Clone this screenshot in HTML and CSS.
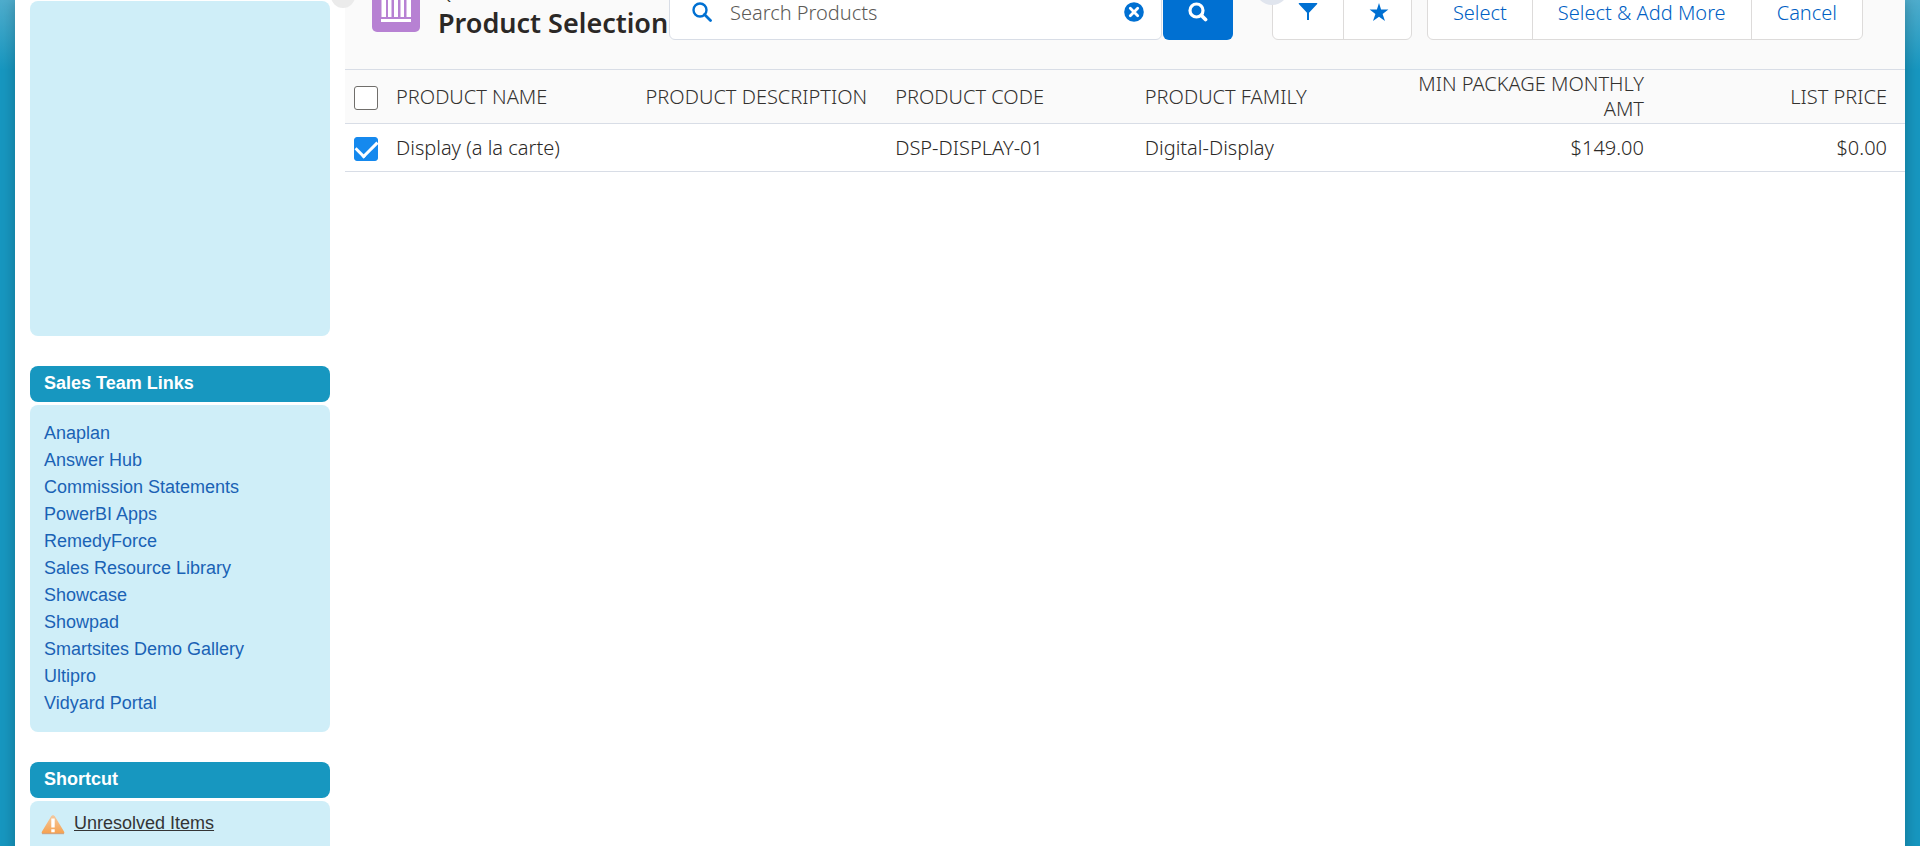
FILE: index.html
```html
<!DOCTYPE html>
<html lang="en">
<head>
<meta charset="utf-8">
<title>Product Selection</title>
<link rel="stylesheet" href="styles.css">
</head>
<body>
<div class="page">
  <aside class="sidebar">
    <div class="panel panel-empty"></div>
    <section class="module">
      <h2 class="module-title">Sales Team Links</h2>
      <ul class="panel links">
        <li><a href="#">Anaplan</a></li>
        <li><a href="#">Answer Hub</a></li>
        <li><a href="#">Commission Statements</a></li>
        <li><a href="#">PowerBI Apps</a></li>
        <li><a href="#">RemedyForce</a></li>
        <li><a href="#">Sales Resource Library</a></li>
        <li><a href="#">Showcase</a></li>
        <li><a href="#">Showpad</a></li>
        <li><a href="#">Smartsites Demo Gallery</a></li>
        <li><a href="#">Ultipro</a></li>
        <li><a href="#">Vidyard Portal</a></li>
      </ul>
    </section>
    <section class="module">
      <h2 class="module-title">Shortcut</h2>
      <div class="panel shortcut">
        <svg class="warn" viewBox="0 0 24 21" aria-hidden="true">
          <defs><linearGradient id="warn-fill" x1="0" y1="0" x2="0" y2="1"><stop offset="0" stop-color="#f3c9a0"/><stop offset="1" stop-color="#f6a04d"/></linearGradient></defs>
          <path d="M12 1.2c.9 0 1.6.5 2.1 1.5L23 17.6c.8 1.5.3 2.4-1.2 2.4H2.2C.7 20 .2 19.100 1 17.600L9.900 2.700C10.400 1.700 11.100 1.200 12 1.200z" fill="url(#warn-fill)"/>
          <path d="M1 19.700h22" stroke="#c9a58a" stroke-width="1"/>
          <path d="M10.300 4.500h3.400v9h-3.400zM10.300 15.200h3.400v3h-3.400z" fill="#fff"/>
        </svg>
        <a href="#">Unresolved Items</a>
      </div>
    </section>
  </aside>
  <main class="main">
    <span class="handle"></span>
    <header class="topbar">
      <span class="bubble"></span>
      <svg class="quote-icon" viewBox="0 0 48 48" aria-hidden="true">
        <rect width="48" height="48" rx="5" fill="#b781d3"/>
        <path d="M9 12L24 5l15 7zM9.500 14h4.500v19H9.500zM16 14h3.500v19H16zM22 14h4v19h-4zM28.500 14h3.500v19h-3.500zM34.500 14h4.500v19h-4.500zM9 35h30v3H9z" fill="#fff"/>
      </svg>
      <div class="heading">
        <p class="eyebrow">Quote</p>
        <h1 class="title">Product Selection</h1>
      </div>
      <form class="search">
        <div class="search-box">
          <svg class="icon" viewBox="0 0 20 20" aria-hidden="true"><circle cx="8" cy="8" r="6.500" fill="none" stroke="#0070d2" stroke-width="2.400"/><path d="M12.500 12.500l6 6" stroke="#0070d2" stroke-width="2.800" stroke-linecap="round"/></svg>
          <input class="search-input" type="text" placeholder="Search Products" aria-label="Search Products">
          <button class="clear" type="button" aria-label="Clear">
            <svg class="icon" viewBox="0 0 20 20"><circle cx="10" cy="10" r="9.800" fill="#0070d2"/><path d="M6.300 6.300l7.400 7.400M13.700 6.300l-7.400 7.400" stroke="#fff" stroke-width="2.800" stroke-linecap="round"/></svg>
          </button>
        </div>
        <button class="go" type="button" aria-label="Search">
          <svg class="icon" viewBox="0 0 20 20"><circle cx="8.500" cy="8.500" r="6.500" fill="none" stroke="#fff" stroke-width="3.200"/><path d="M13.500 13.500l4 4" stroke="#fff" stroke-width="3.800" stroke-linecap="round"/></svg>
        </button>
      </form>
      <div class="group tools">
        <button class="btn" type="button" aria-label="Filter"><svg class="icon" viewBox="0 0 20 20"><path d="M.8 1h18.400v1L11 10.800V18H9v-7.200L.8 2z" fill="#0070d2"/></svg></button>
        <button class="btn" type="button" aria-label="Favorites"><svg class="icon" viewBox="0 0 20 20"><path d="M10 1l2.100 6.400 7.300.1-5.800 4.400 2.400 7.100L10 14.800 4 19l2.400-7.100L.6 7.500l7.300-.1z" fill="#0070d2"/></svg></button>
      </div>
      <div class="group actions">
        <button class="btn" type="button">Select</button>
        <button class="btn" type="button">Select &amp; Add More</button>
        <button class="btn" type="button">Cancel</button>
      </div>
    </header>
    <table class="products">
      <colgroup><col class="col-check"><col class="col"><col class="col"><col class="col"><col class="col"><col class="col"><col></colgroup>
      <thead>
        <tr>
          <th class="check"><input type="checkbox" aria-label="Select all"></th>
          <th>PRODUCT NAME</th><th>PRODUCT DESCRIPTION</th><th>PRODUCT CODE</th><th>PRODUCT FAMILY</th>
          <th class="num">MIN PACKAGE MONTHLY AMT</th><th class="num last">LIST PRICE</th>
        </tr>
      </thead>
      <tbody>
        <tr>
          <td class="check"><input type="checkbox" checked aria-label="Select Display (a la carte)"></td>
          <td>Display (a la carte)</td><td></td><td>DSP-DISPLAY-01</td><td>Digital-Display</td>
          <td class="num">$149.00</td><td class="num last">$0.00</td>
        </tr>
      </tbody>
    </table>
  </main>
</div>
</body>
</html>
```
FILE: styles.css
```css
* { box-sizing: border-box; }
body {
  margin: 0;
  height: 100vh;
  overflow: hidden;
  padding: 0 15px;
  background: linear-gradient(#4fadcd, #1797c0 70px);
  font-family: "Liberation Sans", Arial, sans-serif;
  font-size: 18px;
}
.page {
  display: flex;
  gap: 15px;
  min-height: 100vh;
  padding-left: 15px;
  background: #fff;
  box-shadow: 0 0 14px rgba(0, 0, 0, 0.25);
}
.sidebar { flex: 0 0 300px; padding-top: 1px; }
.panel { margin: 0; border-radius: 8px; background: #cfeef8; }
.panel-empty { height: 335px; }
.module { margin-top: 30px; }
.module-title {
  margin: 0 0 3px;
  padding: 0 14px 2px;
  border-radius: 8px;
  background: #1797c0;
  color: #fff;
  font-size: 18px;
  line-height: 34px;
}
.links { padding: 15px 14px; list-style: none; line-height: 27px; }
.links a { color: #1a62b5; text-decoration: none; }
.shortcut { display: flex; align-items: flex-start; gap: 9px; height: 60px; padding: 0 11px; line-height: 44px; }
.shortcut a { color: #333435; }
.warn { width: 24px; height: 21px; margin-top: 13px; }

.main {
  position: relative;
  flex: 1;
  min-width: 0;
  font-family: "Noto Sans", sans-serif;
  font-size: 20px;
  font-weight: 300;
}
.handle {
  position: absolute;
  z-index: 1;
  left: -14px;
  top: -16px;
  width: 24px;
  height: 24px;
  border-radius: 50%;
  background: #ebebeb;
}
.topbar {
  position: relative;
  display: flex;
  align-items: flex-end;
  height: 70px;
  padding: 0 42px 29px 27px;
  border-bottom: 1px solid #d8dde6;
  background: #fafafa;
}
.bubble {
  position: absolute;
  left: 910px;
  top: -29px;
  width: 34px;
  height: 34px;
  border-radius: 50%;
  background: #e0e5ee;
}
.quote-icon { flex: none; width: 48px; height: 48px; margin: 0 18px 8px 0; }
.heading { width: 231px; color: #2b2826; white-space: nowrap; }
.eyebrow { margin: 0; font-size: 20px; line-height: 28px; }
.title { margin: 0; font-size: 27px; font-weight: 600; line-height: 34px; }
.search { display: flex; flex: 1; gap: 1px; }
.search-box {
  display: flex;
  flex: 1;
  align-items: center;
  gap: 18px;
  height: 56px;
  padding: 0 17px 0 22px;
  border: 1px solid #d8dde6;
  border-radius: 6px;
  background: #fff;
}
.search-input { flex: 1; min-width: 0; border: 0; padding: 0; outline: 0; background: none; font: inherit; }
.search-input::placeholder { color: #5c5a57; }
.icon { display: block; width: 20px; height: 20px; }
.clear { padding: 0; border: 0; background: none; }
.go {
  display: grid;
  place-items: center;
  width: 70px;
  height: 56px;
  border: 0;
  border-radius: 6px;
  background: #0070d2;
}
.group {
  display: flex;
  height: 56px;
  border: 1px solid #dddbda;
  border-radius: 6px;
  background: #fff;
}
.tools { width: 140px; margin: 0 15px 0 39px; }
.tools .btn { display: grid; flex: 1; place-items: center; }
.btn {
  padding: 0 25px;
  border: 0;
  background: none;
  color: #005fc4;
  font: inherit;
  white-space: nowrap;
}
.btn + .btn { border-left: 1px solid #dddbda; }

.products { width: 100%; border-collapse: collapse; table-layout: fixed; color: #33312f; line-height: 25px; }
.col-check { width: 51px; }
.col { width: 16%; }
.products th { height: 53px; padding: 0; background: #fafafa; font-weight: 300; text-align: left; }
.products td { height: 48px; padding: 0; color: #2b2826; }
.products tr { border-bottom: 1px solid #d8dde6; }
.products .num { text-align: right; }
.products .last { padding-right: 18px; }
.products .check { padding: 4px 0 0 9px; }
.check input {
  display: grid;
  place-items: center;
  appearance: none;
  width: 24px;
  height: 24px;
  margin: 0;
  border: 1px solid #706e6b;
  border-radius: 3px;
  background: #fff;
}
.check input:checked { border-color: #1589ee; background: #1589ee; }
.check input:checked::before {
  content: "";
  width: 18px;
  height: 10px;
  margin-bottom: 5px;
  border: solid #fff;
  border-width: 0 0 3px 3px;
  transform: rotate(-45deg);
}
```
